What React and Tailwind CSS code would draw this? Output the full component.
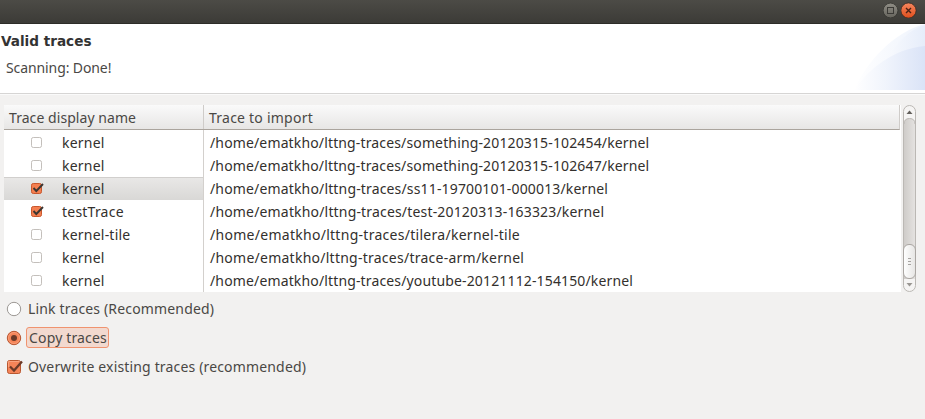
import React from 'react';

const traces = [
  { name: 'kernel', path: '/home/ematkho/lttng-traces/something-20120315-102454/kernel', spacing: 'tracking-[0.14px]' },
  { name: 'kernel', path: '/home/ematkho/lttng-traces/something-20120315-102647/kernel', spacing: 'tracking-[0.14px]' },
  { name: 'kernel', path: '/home/ematkho/lttng-traces/ss11-19700101-000013/kernel', spacing: 'tracking-[0.155px]', checked: true, selected: true },
  { name: 'testTrace', path: '/home/ematkho/lttng-traces/test-20120313-163323/kernel', spacing: 'tracking-[0.17px]', checked: true },
  { name: 'kernel-tile', path: '/home/ematkho/lttng-traces/tilera/kernel-tile', spacing: 'tracking-[0.28px]' },
  { name: 'kernel', path: '/home/ematkho/lttng-traces/trace-arm/kernel', spacing: 'tracking-[0.25px]' },
  { name: 'kernel', path: '/home/ematkho/lttng-traces/youtube-20121112-154150/kernel', spacing: 'tracking-[0.145px]' },
];

function SmallCheck({ checked }) {
  return (
    <svg className="h-[13px] w-[14px] shrink-0" viewBox="0 0 14 13">
      <rect x=".5" y="1.5" width="10" height="10" rx="1.8" fill={checked ? '#f47f50' : '#fff'} stroke={checked ? '#c9572d' : '#c3bfbb'} />
      {checked && <path d="M2.500 6 5.300 9 12 2" fill="none" stroke="#3c3632" strokeWidth="1.900" />}
    </svg>
  );
}

function TitleBar() {
  return (
    <div className="flex h-6 items-start justify-end gap-[2px] border-b border-[#2d2c28] bg-gradient-to-b from-[#4c4b46] to-[#3c3b37] pr-[8px] pt-[2px]">
      <svg className="h-4 w-4" viewBox="0 0 16 16">
        <defs>
          <linearGradient id="maxFill" x2="0" y2="1">
            <stop stopColor="#8f8d85" />
            <stop offset="1" stopColor="#66645d" />
          </linearGradient>
        </defs>
        <circle cx="7.500" cy="8.500" r="7.400" fill="url(#maxFill)" stroke="#34332f" strokeWidth=".8" />
        <rect x="4.500" y="5.500" width="6" height="6" fill="none" stroke="#3b3a36" />
      </svg>
      <svg className="h-4 w-4" viewBox="0 0 16 16">
        <defs>
          <linearGradient id="closeFill" x2="0" y2="1">
            <stop stopColor="#f5875f" />
            <stop offset="1" stopColor="#e04e1c" />
          </linearGradient>
        </defs>
        <circle cx="7.500" cy="8.500" r="7.600" fill="url(#closeFill)" stroke="#3a2a22" strokeWidth=".8" />
        <path d="m5 6 5 5m0-5-5 5" stroke="#4a2114" strokeWidth="1.4" />
      </svg>
    </div>
  );
}

function Banner() {
  return (
    <header className="flex h-[70px] justify-between border-b border-[#d6d5d4] bg-white">
      <div>
        <h1 className="mt-[9px] pl-px font-['DejaVu_Sans'] text-[13.6px] font-bold leading-4 text-[#333]">Valid traces</h1>
        <p className="mt-[9px] pl-[6px] text-[14px] leading-5 tracking-[-0.1px]">Scanning: Done!</p>
      </div>
      <svg className="h-[66px] w-[75px]" viewBox="0 0 75 66">
        <defs>
          <linearGradient id="curveLight">
            <stop stopColor="#fff" />
            <stop offset="1" stopColor="#eef3fc" />
          </linearGradient>
          <linearGradient id="curveMid">
            <stop stopColor="#f8fafe" />
            <stop offset="1" stopColor="#e6edfa" />
          </linearGradient>
          <linearGradient id="curveDeep">
            <stop stopColor="#fff" />
            <stop offset=".45" stopColor="#f0f4fc" />
            <stop offset="1" stopColor="#dae3f7" />
          </linearGradient>
        </defs>
        <path d="M4 66C16 39 43 8 75 0v66Z" fill="url(#curveLight)" />
        <path d="M37 37C46 18 60 5 75 1v65H37Z" fill="url(#curveMid)" />
        <path d="M4 66C18 46 42 25 75 22v44Z" fill="url(#curveDeep)" />
      </svg>
    </header>
  );
}

function Scrollbar() {
  return (
    <svg className="ml-[2px] h-[187px] w-[13px]" viewBox="0 0 13 187">
      <defs>
        <linearGradient id="trough">
          <stop stopColor="#cfccc9" />
          <stop offset="1" stopColor="#e4e2e0" />
        </linearGradient>
        <linearGradient id="thumb">
          <stop stopColor="#fff" />
          <stop offset="1" stopColor="#e6e5e3" />
        </linearGradient>
      </defs>
      <rect x=".5" y=".5" width="12" height="186" rx="6" fill="#f5f4f3" stroke="#bbb8b4" />
      <path d="M1 174V19Q1 13.5 6.5 13.5T12 19V174Z" fill="url(#trough)" />
      <path d="M1 19Q1 13.5 6.5 13.5T12 19" fill="none" stroke="#bbb8b4" />
      <path d="M3.5 9 6.5 5.5 9.5 9Z" fill="#625f5b" />
      <rect x=".5" y="139.500" width="12" height="34" rx="5.500" fill="url(#thumb)" stroke="#aaa6a2" />
      <path d="M5 153.500h3m-3 3h3m-3 3h3" stroke="#a6a3a0" />
      <path d="m3.500 178 3 3.500 3-3.500Z" fill="#999692" />
    </svg>
  );
}

function TraceTable() {
  return (
    <div className="flex h-[187px] pl-1">
      <div className="w-[897px] bg-white">
        <div className="flex h-[25px] w-[896px] border-b border-r border-[#aaa49d] border-r-[#cfccc9] bg-gradient-to-b from-[#fafafa] to-[#e7e6e5]">
          <div className="w-[200px] border-r border-[#cfccc9] pl-[5px] leading-[25px] tracking-[0.06px]">Trace display name</div>
          <div className="pl-[5px] leading-[25px] tracking-[0.23px]">Trace to import</div>
        </div>
        <div className="flex h-[162px] flex-col">
          <div className="h-px w-[200px] border-r border-[#d3d0cd]" />
          {traces.map((t, i) => (
            <div key={i} className="flex h-[23px] leading-[23px] text-[#33302d]">
              <div className={`flex w-[200px] items-center border-r border-[#d3d0cd] pl-[27px] ${t.selected ? 'bg-gradient-to-b from-[#e9e8e7] to-[#d9d8d6] shadow-[inset_0_1px_0_#d1cfcd]' : ''}`}>
                <SmallCheck checked={t.checked} />
                <span className="pl-[17px] tracking-[0.22px]">{t.name}</span>
              </div>
              <div className={`pl-[6px] ${t.spacing}`}>{t.path}</div>
            </div>
          ))}
        </div>
      </div>
      <Scrollbar />
    </div>
  );
}

function Radio({ checked }) {
  return (
    <svg className="h-4 w-4 shrink-0" viewBox="0 0 16 16">
      <circle cx="8" cy="8" r="6.700" fill={checked ? '#f58458' : '#fff'} stroke={checked ? '#b65631' : '#9c9894'} />
      {checked && <circle cx="8" cy="8" r="5.500" fill="none" stroke="#f9a27e" strokeWidth=".8" />}
      {checked && <circle cx="8" cy="8" r="3" fill="#6b3a28" />}
    </svg>
  );
}

function Options() {
  return (
    <div className="flex flex-col pl-[6px] pt-[5px] tracking-[0.16px]">
      <label className="flex h-[23px] items-center">
        <Radio />
        <span className="pl-[6px]">Link traces (Recommended)</span>
      </label>
      <label className="mt-[6px] flex h-[23px] items-center">
        <Radio checked />
        <span className="ml-[4px] h-[21px] w-[83px] whitespace-nowrap rounded-[3px] border border-[#f0936f] bg-[#f2d9cf] pl-[2px] leading-[20px]">Copy traces</span>
      </label>
      <label className="mt-[6px] flex h-[23px] items-center">
        <svg className="h-4 w-[17px] shrink-0" viewBox="0 0 17 16">
          <rect x="1.500" y="1.500" width="13" height="13" rx="2" fill="#f58458" stroke="#b9572f" />
          <path d="M2.500 8V2.500h11" fill="none" stroke="#f9a27e" />
          <path d="m4 7.500 4 4 8-9" fill="none" stroke="#6b3a28" strokeWidth="2.300" />
        </svg>
        <span className="pl-[5px]">Overwrite existing traces (recommended)</span>
      </label>
    </div>
  );
}

export default function App() {
  return (
    <div className="h-[419px] w-[925px] overflow-hidden bg-[#f2f1f0] font-['Noto_Sans',sans-serif] text-[14px] text-[#4a4845]">
      <TitleBar />
      <Banner />
      <main className="border-t border-[#fafafa] pt-[10px]">
        <TraceTable />
        <Options />
      </main>
    </div>
  );
}
